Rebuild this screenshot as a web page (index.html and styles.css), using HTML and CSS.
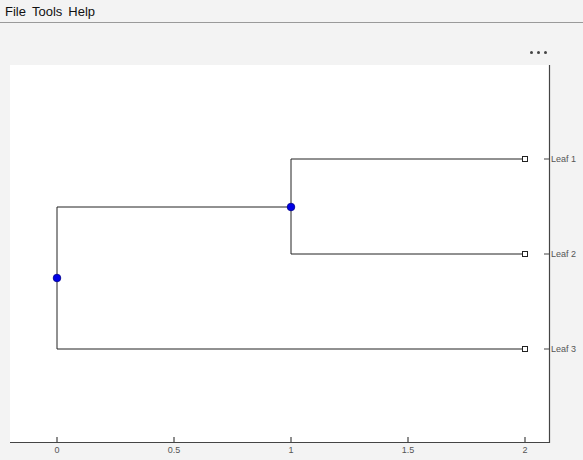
FILE: index.html
```html
<!DOCTYPE html>
<html>
<head>
<meta charset="utf-8">
<link rel="stylesheet" href="styles.css">
</head>
<body>
<div class="menubar">
  <span class="menu-item">File</span>
  <span class="menu-item">Tools</span>
  <span class="menu-item">Help</span>
</div>
<div class="figure">
  <div class="toolbar"><span class="dot"></span><span class="dot"></span><span class="dot"></span></div>
  <svg class="plot" width="583" height="395" viewBox="0 0 583 395">
    <rect x="10" y="0" width="539" height="377" fill="#ffffff"/>
    <g stroke="#222" stroke-width="1" fill="none">
      <path d="M57 142 V284"/>
      <path d="M57 142 H291"/>
      <path d="M57 284 H525"/>
      <path d="M291 94 V189"/>
      <path d="M291 94 H525"/>
      <path d="M291 189 H525"/>
    </g>
    <g stroke="#444" stroke-width="1.2" fill="none">
      <path d="M10 377.5 H549.5 V0"/>
      <path d="M57 372 V377 M174 372 V377 M291 372 V377 M408 372 V377 M525 372 V377"/>
      <path d="M544 94 H549 M544 189 H549 M544 284 H549"/>
    </g>
    <g fill="#fff" stroke="#222" stroke-width="1">
      <rect x="522.5" y="91.5" width="5" height="5"/>
      <rect x="522.5" y="186.5" width="5" height="5"/>
      <rect x="522.5" y="281.5" width="5" height="5"/>
    </g>
    <g fill="#0000e6" stroke="#00008a" stroke-width="0.8">
      <circle cx="291" cy="142" r="3.8"/>
      <circle cx="57" cy="213" r="3.8"/>
    </g>
    <g class="ticklabel" text-anchor="middle">
      <text x="57" y="388">0</text>
      <text x="174" y="388">0.5</text>
      <text x="291" y="388">1</text>
      <text x="408" y="388">1.5</text>
      <text x="525" y="388">2</text>
    </g>
    <g class="ticklabel">
      <text x="551" y="97">Leaf 1</text>
      <text x="551" y="192">Leaf 2</text>
      <text x="551" y="287">Leaf 3</text>
    </g>
  </svg>
</div>
</body>
</html>
```
FILE: styles.css
```css
html, body {
  margin: 0;
  padding: 0;
  background: #f3f3f3;
  width: 583px;
  height: 460px;
  overflow: hidden;
  font-family: "Liberation Sans", Arial, sans-serif;
}
.menubar {
  height: 23px;
  box-sizing: border-box;
  border-bottom: 1px solid #9a9a9a;
  display: flex;
  align-items: center;
  gap: 6px;
  padding-left: 5px;
  font-size: 13px;
  color: #111;
}
.figure {
  display: flex;
  flex-direction: column;
}
.toolbar {
  height: 42px;
  box-sizing: border-box;
  display: flex;
  justify-content: flex-end;
  align-items: flex-start;
  gap: 4px;
  padding-right: 36px;
  padding-top: 28px;
}
.dot {
  width: 3px;
  height: 3px;
  border-radius: 50%;
  background: #444;
}
.plot {
  display: block;
}
.ticklabel {
  font-family: "Liberation Sans", Arial, sans-serif;
  font-size: 9px;
  fill: #555;
}
```
